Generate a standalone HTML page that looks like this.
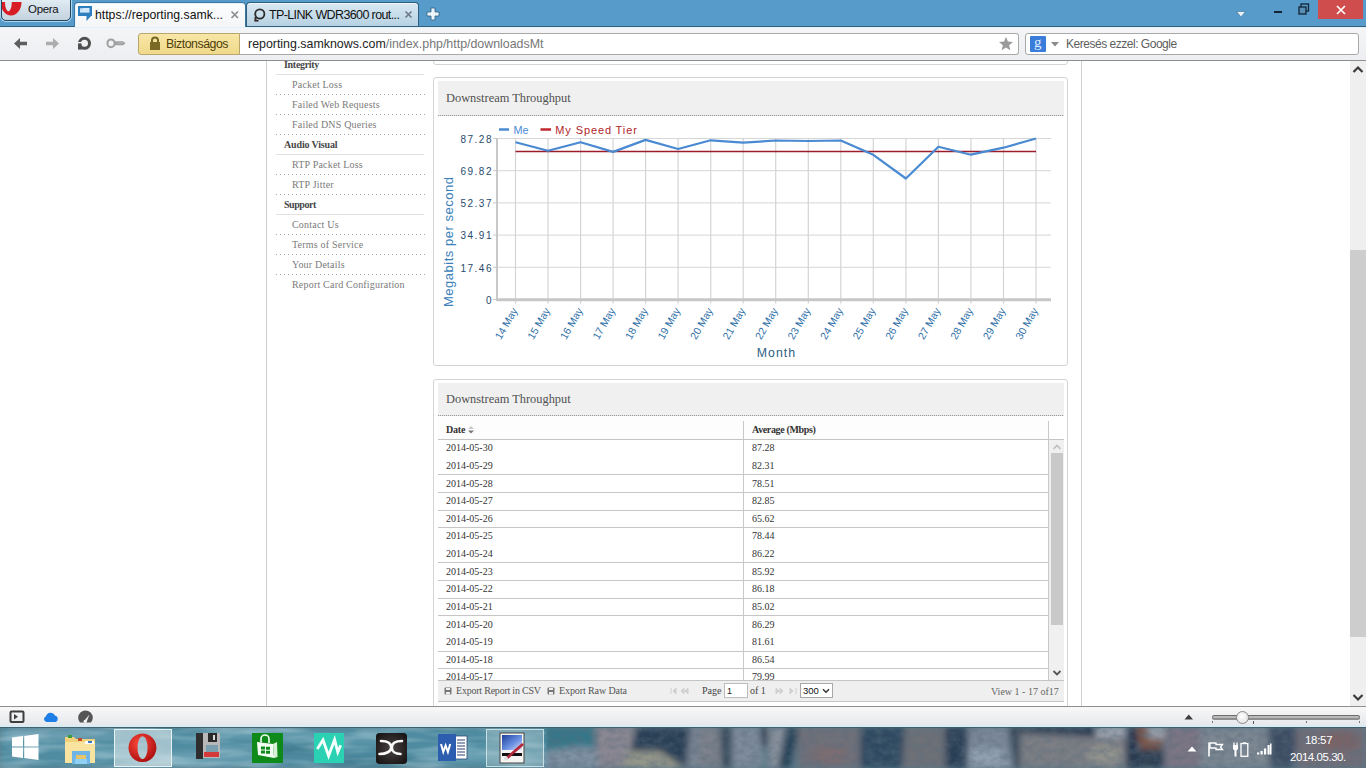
<!DOCTYPE html>
<html><head><meta charset="utf-8">
<style>
*{box-sizing:border-box}
html,body{margin:0;padding:0}
body{width:1366px;height:768px;position:relative;overflow:hidden;background:#fff;font-family:"Liberation Sans",sans-serif}
.a{position:absolute}
.ui{font-family:"Liberation Sans",sans-serif;white-space:nowrap}
.dots{height:1px;background:repeating-linear-gradient(90deg,#a8a8a8 0 1px,transparent 1px 4px)}
.hdr{background:#f0f0f0}
.hdr::after{content:"";position:absolute;left:0;right:0;bottom:-1px;height:1px;background:repeating-linear-gradient(90deg,#9c9c9c 0 1px,#dedede 1px 2px)}
.sf{font-family:"Liberation Serif",serif;white-space:nowrap}
</style></head><body>

<!-- ===== TAB BAR ===== -->
<div class="a" style="left:0;top:0;width:1366px;height:27px;background:#569bca;border-bottom:1px solid #2d5f80"></div>
<!-- Opera button -->
<div class="a" style="left:1px;top:-3px;width:70px;height:24px;border:1px solid #27465c;border-radius:0 0 5px 5px;background:linear-gradient(#e3edf4,#c4d3df);box-shadow:0 0 0 1px #a8d8f4"></div>
<div class="a ui" style="left:28px;top:3px;font-size:11.5px;letter-spacing:-0.3px;color:#111">Opera</div>
<!-- active tab -->
<div class="a" style="left:74px;top:2px;width:172px;height:26px;background:linear-gradient(#fbfdfe,#f3f5f7);border-radius:4px 4px 0 0;border:1px solid #3f77a0;border-bottom:none;box-shadow:inset 1px 1px 0 #e4f4fd"></div>
<div class="a ui" style="left:95px;top:8px;font-size:12.25px;color:#111">https://reporting.samk...</div>
<svg class="a" style="left:230px;top:10px" width="10" height="10"><path d="M1.5 1.5L8 8M8 1.5L1.5 8" stroke="#8c8c8c" stroke-width="1.7"/></svg>
<!-- inactive tab -->
<div class="a" style="left:246px;top:2px;width:173px;height:24px;background:linear-gradient(#d8e8f2,#b7d2e3);border-radius:4px 4px 0 0;border:1px solid #2d5f80;border-bottom:none;box-shadow:inset 0 1px 0 #f0f8ff"></div>
<div class="a ui" style="left:269px;top:8px;font-size:12.5px;letter-spacing:-0.62px;color:#111">TP-LINK WDR3600 rout...</div>
<svg class="a" style="left:404px;top:10px" width="10" height="10"><path d="M1.5 1.5L7.5 7.5M7.5 1.5L1.5 7.5" stroke="#6f7d88" stroke-width="1.7"/></svg>
<!-- plus -->
<svg class="a" style="left:426px;top:7px" width="15" height="14"><path d="M5 1H9V5H13V9H9V13H5V9H1V5H5Z" fill="#eef6fc" stroke="#2f5f80" stroke-width="0.8"/></svg>
<!-- window controls -->
<div class="a" style="left:1318px;top:0;width:45px;height:19px;background:#cf4d4d"></div>

<!-- ===== TOOLBAR ===== -->
<div class="a" style="left:0;top:27px;width:1366px;height:34px;background:linear-gradient(#f3f5f7,#eceef1);border-top:1px solid #e6f2fa;border-bottom:1px solid #8e8e8e"></div>
<!-- security badge -->
<div class="a" style="left:138px;top:33px;width:102px;height:22px;background:linear-gradient(#f7e6a6,#f0d98a);border:1px solid #b8a66c;border-radius:3px 0 0 3px"></div>
<div class="a ui" style="left:166px;top:37px;font-size:12.3px;letter-spacing:-0.45px;color:#4d3e08">Biztonságos</div>
<!-- address -->
<div class="a" style="left:239px;top:33px;width:780px;height:22px;background:#fff;border:1px solid #a9a9a9;border-left:1px solid #b8a66c;border-radius:0 3px 3px 0"></div>
<div class="a ui" style="left:248px;top:37px;font-size:12.4px;color:#222">reporting.samknows.com<span style="color:#777">/index.php/http/downloadsMt</span></div>
<!-- search -->
<div class="a" style="left:1025px;top:33px;width:334px;height:22px;background:#fff;border:1px solid #a9a9a9;border-radius:3px"></div>
<div class="a" style="left:1030px;top:36px;width:16px;height:16px;background:#3b7bd9;border-radius:1px"></div>
<div class="a ui" style="left:1066px;top:37px;font-size:12px;letter-spacing:-0.48px;color:#5e5e5e">Keresés ezzel: Google</div>

<!-- chrome icons -->
<svg class="a" style="left:2px;top:2px" width="22" height="16"><ellipse cx="9" cy="0" rx="10.5" ry="13.6" fill="#d81c24"/><ellipse cx="6.4" cy="0" rx="3.4" ry="9.2" fill="#dce6ee"/></svg>
<svg class="a" style="left:78px;top:6px" width="15" height="16"><path d="M0 0H14V10H13L8.5 15V10H0Z" fill="#2e7fbf"/><rect x="2" y="2" width="9.5" height="4.6" fill="#cfe8fb"/><rect x="2" y="2" width="3" height="1.5" fill="#a8d0ee"/></svg>
<svg class="a" style="left:253px;top:8px" width="14" height="15"><circle cx="6.8" cy="6" r="4.6" fill="none" stroke="#2b2b2b" stroke-width="1.8"/><rect x="1.5" y="9" width="2" height="4" fill="#3a2a2a"/><rect x="1.5" y="12" width="4" height="1.6" fill="#3a2a2a"/></svg>
<!-- window controls -->
<svg class="a" style="left:1236px;top:11px" width="10" height="7"><path d="M0.5 0.5H9.5L5 6Z" fill="#e8f2fb" stroke="#3f6f90" stroke-width="0.6"/></svg>
<div class="a" style="left:1274px;top:11px;width:8px;height:2px;background:#142436"></div>
<svg class="a" style="left:1298px;top:3px" width="12" height="12"><rect x="3" y="1" width="7.5" height="7" fill="none" stroke="#142436" stroke-width="1.3"/><rect x="1" y="4" width="7" height="7" fill="#5a8fb5" stroke="#142436" stroke-width="1.3"/></svg>
<svg class="a" style="left:1336px;top:5px" width="10" height="10"><path d="M1 1L9 9M9 1L1 9" stroke="#fff" stroke-width="1.7"/></svg>
<!-- nav icons -->
<svg class="a" style="left:13px;top:37px" width="16" height="14"><path d="M1 6.5L7 1V4.8H14V8.2H7V12Z" fill="#5e5e5e"/></svg>
<svg class="a" style="left:44px;top:37px" width="16" height="14"><path d="M15 6.5L9 1V4.8H2V8.2H9V12Z" fill="#acacac"/></svg>
<svg class="a" style="left:76px;top:35px" width="17" height="17"><circle cx="8.5" cy="8.3" r="5" fill="none" stroke="#505050" stroke-width="3"/><rect x="1" y="7" width="7" height="1.6" fill="#f0f1f3"/><rect x="2" y="8.6" width="3.6" height="6" fill="#505050"/></svg>
<svg class="a" style="left:106px;top:38px" width="21" height="11"><ellipse cx="5" cy="5.3" rx="3.6" ry="3.9" fill="none" stroke="#a0a0a0" stroke-width="2"/><path d="M8.5 3.3H17L19.5 5.3L17 7.3H8.5Z" fill="#a0a0a0"/><path d="M11 5H17" stroke="#c8c8c8" stroke-width="0.6"/></svg>
<svg class="a" style="left:149px;top:36px" width="12" height="14"><path d="M3 6V4.5A3 3 0 0 1 9 4.5V6" fill="none" stroke="#766627" stroke-width="2"/><rect x="1" y="6" width="10" height="8" fill="#7a6a25"/></svg>
<svg class="a" style="left:998px;top:36px" width="16" height="15"><path d="M8 0.8L9.9 5.6L15 6L11.1 9.3L12.4 14.3L8 11.5L3.6 14.3L4.9 9.3L1 6L6.1 5.6Z" fill="#9a9a9a"/></svg>
<svg class="a" style="left:1051px;top:42px" width="8" height="5"><path d="M0 0H8L4 4.5Z" fill="#8a8a8a"/></svg>
<div class="a ui" style="left:1034px;top:33px;font-size:15px;line-height:18px;color:#dfefff;font-family:'Liberation Serif',serif">g</div>

<!-- ===== PAGE ===== -->
<div class="a" style="left:266px;top:61px;width:1px;height:645px;background:#cfcfcf"></div>
<div class="a" style="left:1081px;top:61px;width:1px;height:645px;background:#cfcfcf"></div>

<div class="a" style="left:0;top:0;width:1366px;height:768px;clip-path:polygon(0 61px,1366px 61px,1366px 706px,0 706px)">
<!-- previous panel bottom -->
<div class="a" style="left:433px;top:40px;width:635px;height:25px;border:1px solid #d4d4d4;border-radius:3px;background:#fff"></div>
<!-- chart panel -->
<div class="a" style="left:433px;top:77px;width:635px;height:289px;border:1px solid #d4d4d4;border-radius:3px;background:#fff"></div>
<div class="a hdr" style="left:438px;top:81px;width:626px;height:34px"></div>
<div class="a sf" style="left:446px;top:92px;font-size:12.4px;line-height:12px;color:#505050">Downstream Throughput</div>
<!-- chart -->
<svg class="a" style="left:433px;top:115px" width="634" height="250"><g transform="translate(-433,-115)" font-family="Liberation Sans, sans-serif">
<line x1="497" y1="138.5" x2="1051" y2="138.5" stroke="#d6d6d6" stroke-width="1"/>
<line x1="493" y1="138.5" x2="497" y2="138.5" stroke="#c8c8c8" stroke-width="1"/>
<line x1="497" y1="170.7" x2="1051" y2="170.7" stroke="#d6d6d6" stroke-width="1"/>
<line x1="493" y1="170.7" x2="497" y2="170.7" stroke="#c8c8c8" stroke-width="1"/>
<line x1="497" y1="202.9" x2="1051" y2="202.9" stroke="#d6d6d6" stroke-width="1"/>
<line x1="493" y1="202.9" x2="497" y2="202.9" stroke="#c8c8c8" stroke-width="1"/>
<line x1="497" y1="235.1" x2="1051" y2="235.1" stroke="#d6d6d6" stroke-width="1"/>
<line x1="493" y1="235.1" x2="497" y2="235.1" stroke="#c8c8c8" stroke-width="1"/>
<line x1="497" y1="267.3" x2="1051" y2="267.3" stroke="#d6d6d6" stroke-width="1"/>
<line x1="493" y1="267.3" x2="497" y2="267.3" stroke="#c8c8c8" stroke-width="1"/>
<line x1="515.5" y1="138" x2="515.5" y2="303.5" stroke="#d4d4d4" stroke-width="1.2"/>
<line x1="548.0" y1="138" x2="548.0" y2="303.5" stroke="#d4d4d4" stroke-width="1.2"/>
<line x1="580.6" y1="138" x2="580.6" y2="303.5" stroke="#d4d4d4" stroke-width="1.2"/>
<line x1="613.1" y1="138" x2="613.1" y2="303.5" stroke="#d4d4d4" stroke-width="1.2"/>
<line x1="645.6" y1="138" x2="645.6" y2="303.5" stroke="#d4d4d4" stroke-width="1.2"/>
<line x1="678.1" y1="138" x2="678.1" y2="303.5" stroke="#d4d4d4" stroke-width="1.2"/>
<line x1="710.7" y1="138" x2="710.7" y2="303.5" stroke="#d4d4d4" stroke-width="1.2"/>
<line x1="743.2" y1="138" x2="743.2" y2="303.5" stroke="#d4d4d4" stroke-width="1.2"/>
<line x1="775.7" y1="138" x2="775.7" y2="303.5" stroke="#d4d4d4" stroke-width="1.2"/>
<line x1="808.3" y1="138" x2="808.3" y2="303.5" stroke="#d4d4d4" stroke-width="1.2"/>
<line x1="840.8" y1="138" x2="840.8" y2="303.5" stroke="#d4d4d4" stroke-width="1.2"/>
<line x1="873.3" y1="138" x2="873.3" y2="303.5" stroke="#d4d4d4" stroke-width="1.2"/>
<line x1="905.9" y1="138" x2="905.9" y2="303.5" stroke="#d4d4d4" stroke-width="1.2"/>
<line x1="938.4" y1="138" x2="938.4" y2="303.5" stroke="#d4d4d4" stroke-width="1.2"/>
<line x1="970.9" y1="138" x2="970.9" y2="303.5" stroke="#d4d4d4" stroke-width="1.2"/>
<line x1="1003.5" y1="138" x2="1003.5" y2="303.5" stroke="#d4d4d4" stroke-width="1.2"/>
<line x1="1036.0" y1="138" x2="1036.0" y2="303.5" stroke="#d4d4d4" stroke-width="1.2"/>
<line x1="497" y1="138" x2="497" y2="301" stroke="#c8c8c8" stroke-width="2"/>
<line x1="497" y1="299.8" x2="1051" y2="299.8" stroke="#c6c6c6" stroke-width="3"/>
<line x1="493" y1="299.5" x2="497" y2="299.5" stroke="#c8c8c8" stroke-width="1"/>
<text x="493" y="142.7" text-anchor="end" font-size="10" fill="#274b6d" letter-spacing="1.5">87.28</text>
<text x="493" y="174.9" text-anchor="end" font-size="10" fill="#274b6d" letter-spacing="1.5">69.82</text>
<text x="493" y="207.1" text-anchor="end" font-size="10" fill="#274b6d" letter-spacing="1.5">52.37</text>
<text x="493" y="239.3" text-anchor="end" font-size="10" fill="#274b6d" letter-spacing="1.5">34.91</text>
<text x="493" y="271.5" text-anchor="end" font-size="10" fill="#274b6d" letter-spacing="1.5">17.46</text>
<text x="493" y="303.7" text-anchor="end" font-size="10" fill="#274b6d" letter-spacing="1.5">0</text>
<line x1="515.5" y1="151.5" x2="1036.0" y2="151.5" stroke="#9c1c2a" stroke-width="1.4"/>
<polyline points="515.5,142.2 548.0,150.8 580.6,142.2 613.1,151.9 645.6,139.9 678.1,149.0 710.7,140.3 743.2,142.7 775.7,140.5 808.3,141.0 840.8,140.5 873.3,154.8 905.9,178.5 938.4,146.7 970.9,154.7 1003.5,147.7 1036.0,138.5" fill="none" stroke="#4a8ad2" stroke-width="2.2" stroke-linejoin="round"/>
<line x1="499" y1="129.5" x2="509" y2="129.5" stroke="#4a8bd4" stroke-width="2.5"/>
<text x="513.5" y="133.7" font-size="11" fill="#4a8bd4" textLength="15" lengthAdjust="spacingAndGlyphs">Me</text>
<line x1="540.5" y1="129.5" x2="551" y2="129.5" stroke="#c0282d" stroke-width="2.5"/>
<text x="555.3" y="133.7" font-size="11" fill="#b0252b" textLength="81.5" lengthAdjust="spacing">My Speed Tier</text>
<text transform="translate(518.0,310.5) rotate(-60)" text-anchor="end" font-size="10.5" fill="#2f70a8">14 May</text>
<text transform="translate(550.5,310.5) rotate(-60)" text-anchor="end" font-size="10.5" fill="#2f70a8">15 May</text>
<text transform="translate(583.1,310.5) rotate(-60)" text-anchor="end" font-size="10.5" fill="#2f70a8">16 May</text>
<text transform="translate(615.6,310.5) rotate(-60)" text-anchor="end" font-size="10.5" fill="#2f70a8">17 May</text>
<text transform="translate(648.1,310.5) rotate(-60)" text-anchor="end" font-size="10.5" fill="#2f70a8">18 May</text>
<text transform="translate(680.6,310.5) rotate(-60)" text-anchor="end" font-size="10.5" fill="#2f70a8">19 May</text>
<text transform="translate(713.2,310.5) rotate(-60)" text-anchor="end" font-size="10.5" fill="#2f70a8">20 May</text>
<text transform="translate(745.7,310.5) rotate(-60)" text-anchor="end" font-size="10.5" fill="#2f70a8">21 May</text>
<text transform="translate(778.2,310.5) rotate(-60)" text-anchor="end" font-size="10.5" fill="#2f70a8">22 May</text>
<text transform="translate(810.8,310.5) rotate(-60)" text-anchor="end" font-size="10.5" fill="#2f70a8">23 May</text>
<text transform="translate(843.3,310.5) rotate(-60)" text-anchor="end" font-size="10.5" fill="#2f70a8">24 May</text>
<text transform="translate(875.8,310.5) rotate(-60)" text-anchor="end" font-size="10.5" fill="#2f70a8">25 May</text>
<text transform="translate(908.4,310.5) rotate(-60)" text-anchor="end" font-size="10.5" fill="#2f70a8">26 May</text>
<text transform="translate(940.9,310.5) rotate(-60)" text-anchor="end" font-size="10.5" fill="#2f70a8">27 May</text>
<text transform="translate(973.4,310.5) rotate(-60)" text-anchor="end" font-size="10.5" fill="#2f70a8">28 May</text>
<text transform="translate(1006.0,310.5) rotate(-60)" text-anchor="end" font-size="10.5" fill="#2f70a8">29 May</text>
<text transform="translate(1038.5,310.5) rotate(-60)" text-anchor="end" font-size="10.5" fill="#2f70a8">30 May</text>
<text transform="translate(453,307) rotate(-90)" font-size="13" fill="#3a80ba" textLength="130" lengthAdjust="spacing">Megabits per second</text>
<text x="756.7" y="356.8" font-size="12.3" fill="#2b6182" textLength="38.5" lengthAdjust="spacing">Month</text>
</g></svg>
<!-- table panel -->
<div class="a" style="left:433px;top:379px;width:635px;height:340px;border:1px solid #d4d4d4;border-radius:3px;background:#fff"></div>
<div class="a hdr" style="left:438px;top:383px;width:626px;height:32px"></div>
<div class="a sf" style="left:446px;top:393px;font-size:12.4px;line-height:12px;color:#505050">Downstream Throughput</div>

<!-- table -->
<div class="a" style="left:438px;top:416px;width:611px;height:23px;background:#fdfdfd"></div>
<div class="a sf" style="left:446px;top:425px;font-size:10px;line-height:10px;font-weight:bold;color:#333;letter-spacing:-0.2px">Date</div>
<svg class="a" style="left:467px;top:426px" width="8" height="8"><path d="M1 3 L4 0 L7 3Z" fill="#c8c8c8"/><path d="M1 4.5 L4 7.5 L7 4.5Z" fill="#777"/></svg>
<div class="a sf" style="left:752px;top:425px;font-size:10px;line-height:10px;font-weight:bold;color:#333;letter-spacing:-0.35px">Average (Mbps)</div>
<div class="a" style="left:743px;top:421px;width:1px;height:18px;background:#c8c8c8"></div>
<div class="a" style="left:1048px;top:421px;width:1px;height:18px;background:#c8c8c8"></div>
<div class="a" style="left:438px;top:439px;width:626px;height:1px;background:#c4c4c4"></div>
<div class="a" style="left:438px;top:440px;width:611px;height:240px;overflow:hidden">
<div class="a sf" style="left:8px;top:3px;font-size:10px;line-height:10px;color:#333">2014-05-30</div>
<div class="a sf" style="left:314px;top:3px;font-size:10px;line-height:10px;color:#333">87.28</div>
<div class="a sf" style="left:8px;top:21px;font-size:10px;line-height:10px;color:#333">2014-05-29</div>
<div class="a sf" style="left:314px;top:21px;font-size:10px;line-height:10px;color:#333">82.31</div>
<div class="a sf" style="left:8px;top:39px;font-size:10px;line-height:10px;color:#333">2014-05-28</div>
<div class="a sf" style="left:314px;top:39px;font-size:10px;line-height:10px;color:#333">78.51</div>
<div class="a sf" style="left:8px;top:56px;font-size:10px;line-height:10px;color:#333">2014-05-27</div>
<div class="a sf" style="left:314px;top:56px;font-size:10px;line-height:10px;color:#333">82.85</div>
<div class="a sf" style="left:8px;top:74px;font-size:10px;line-height:10px;color:#333">2014-05-26</div>
<div class="a sf" style="left:314px;top:74px;font-size:10px;line-height:10px;color:#333">65.62</div>
<div class="a sf" style="left:8px;top:91px;font-size:10px;line-height:10px;color:#333">2014-05-25</div>
<div class="a sf" style="left:314px;top:91px;font-size:10px;line-height:10px;color:#333">78.44</div>
<div class="a sf" style="left:8px;top:109px;font-size:10px;line-height:10px;color:#333">2014-05-24</div>
<div class="a sf" style="left:314px;top:109px;font-size:10px;line-height:10px;color:#333">86.22</div>
<div class="a sf" style="left:8px;top:127px;font-size:10px;line-height:10px;color:#333">2014-05-23</div>
<div class="a sf" style="left:314px;top:127px;font-size:10px;line-height:10px;color:#333">85.92</div>
<div class="a sf" style="left:8px;top:144px;font-size:10px;line-height:10px;color:#333">2014-05-22</div>
<div class="a sf" style="left:314px;top:144px;font-size:10px;line-height:10px;color:#333">86.18</div>
<div class="a sf" style="left:8px;top:162px;font-size:10px;line-height:10px;color:#333">2014-05-21</div>
<div class="a sf" style="left:314px;top:162px;font-size:10px;line-height:10px;color:#333">85.02</div>
<div class="a sf" style="left:8px;top:180px;font-size:10px;line-height:10px;color:#333">2014-05-20</div>
<div class="a sf" style="left:314px;top:180px;font-size:10px;line-height:10px;color:#333">86.29</div>
<div class="a sf" style="left:8px;top:197px;font-size:10px;line-height:10px;color:#333">2014-05-19</div>
<div class="a sf" style="left:314px;top:197px;font-size:10px;line-height:10px;color:#333">81.61</div>
<div class="a sf" style="left:8px;top:215px;font-size:10px;line-height:10px;color:#333">2014-05-18</div>
<div class="a sf" style="left:314px;top:215px;font-size:10px;line-height:10px;color:#333">86.54</div>
<div class="a sf" style="left:8px;top:232px;font-size:10px;line-height:10px;color:#333">2014-05-17</div>
<div class="a sf" style="left:314px;top:232px;font-size:10px;line-height:10px;color:#333">79.99</div>
<div class="a" style="left:0;top:34px;width:611px;height:1px;background:#c6c6c6"></div>
<div class="a" style="left:0;top:52px;width:611px;height:1px;background:#c6c6c6"></div>
<div class="a" style="left:0;top:70px;width:611px;height:1px;background:#c6c6c6"></div>
<div class="a" style="left:0;top:87px;width:611px;height:1px;background:#c6c6c6"></div>
<div class="a" style="left:0;top:122px;width:611px;height:1px;background:#c6c6c6"></div>
<div class="a" style="left:0;top:140px;width:611px;height:1px;background:#c6c6c6"></div>
<div class="a" style="left:0;top:158px;width:611px;height:1px;background:#c6c6c6"></div>
<div class="a" style="left:0;top:175px;width:611px;height:1px;background:#c6c6c6"></div>
<div class="a" style="left:0;top:211px;width:611px;height:1px;background:#c6c6c6"></div>
<div class="a" style="left:0;top:228px;width:611px;height:1px;background:#c6c6c6"></div>
<div class="a" style="left:305px;top:0;width:1px;height:240px;background:#c8c8c8"></div>
<div class="a" style="left:610px;top:0;width:1px;height:240px;background:#c8c8c8"></div>
</div>
<div class="a" style="left:1049px;top:440px;width:15px;height:240px;background:#f0f0f0"></div>
<div class="a" style="left:1051px;top:453px;width:12px;height:172px;background:#c9c9c9"></div>
<svg class="a" style="left:1052px;top:443px" width="10" height="8"><path d="M1.5 6 L5 2.5 L8.5 6" fill="none" stroke="#bdbdbd" stroke-width="1.6"/></svg>
<svg class="a" style="left:1052px;top:669px" width="10" height="8"><path d="M1.5 2 L5 5.5 L8.5 2" fill="none" stroke="#555" stroke-width="1.8"/></svg>
<div class="a" style="left:438px;top:680px;width:626px;height:22px;background:#efefef;border-top:1px solid #c4c4c4;border-bottom:1px solid #c4c4c4"></div>
<svg class="a" style="left:444px;top:687px" width="8" height="8"><rect x="0.5" y="0.5" width="7" height="7" rx="1" fill="#777"/><rect x="2" y="1" width="4" height="2" fill="#efefef"/><rect x="2" y="5" width="4" height="2.5" fill="#efefef"/></svg>
<div class="a sf" style="left:456px;top:686px;font-size:10px;line-height:10px;color:#555;letter-spacing:-0.22px">Export Report in CSV</div>
<svg class="a" style="left:547px;top:687px" width="8" height="8"><rect x="0.5" y="0.5" width="7" height="7" rx="1" fill="#777"/><rect x="2" y="1" width="4" height="2" fill="#efefef"/><rect x="2" y="5" width="4" height="2.5" fill="#efefef"/></svg>
<div class="a sf" style="left:559px;top:686px;font-size:10px;line-height:10px;color:#555;letter-spacing:-0.1px">Export Raw Data</div>
<svg class="a" style="left:669px;top:686px" width="28" height="10"><path d="M2 2v6M7 2L4 5l3 3z M15 2l-3 3 3 3z M19 2l-3 3 3 3z" fill="#d0d0d0" stroke="#d0d0d0" stroke-width="1"/></svg>
<div class="a sf" style="left:702px;top:686px;font-size:10px;line-height:10px;color:#444">Page</div>
<div class="a" style="left:724px;top:683px;width:24px;height:15px;background:#fff;border:1px solid #bdbdbd"></div>
<div class="a ui" style="left:727px;top:686px;font-size:9px;line-height:10px;color:#222">1</div>
<div class="a sf" style="left:750px;top:686px;font-size:10px;line-height:10px;color:#444">of 1</div>
<svg class="a" style="left:772px;top:686px" width="28" height="10"><path d="M4 2l3 3-3 3z M8 2l3 3-3 3z M18 2l3 3-3 3z M24 2v6" fill="#d0d0d0" stroke="#d0d0d0" stroke-width="1"/></svg>
<div class="a" style="left:800px;top:683px;width:33px;height:15px;background:#fff;border:1px solid #a8a8a8"></div>
<div class="a ui" style="left:803px;top:686px;font-size:9.5px;line-height:10px;color:#111">300</div>
<svg class="a" style="left:822px;top:688px" width="8" height="6"><path d="M1 1.2L4 4.2L7 1.2" fill="none" stroke="#333" stroke-width="1.5"/></svg>
<div class="a sf" style="left:991px;top:687px;font-size:10px;line-height:10px;color:#666">View 1 - 17 of17</div>
<!-- sidebar -->
<div class="a sf" style="left:284px;top:60px;font-size:10px;line-height:10px;font-weight:bold;color:#484848;letter-spacing:-0.3px">Integrity</div>
<div class="a" style="left:276px;top:74px;width:148px;height:1px;background:#e2e2e2"></div>
<div class="a sf" style="left:292px;top:80px;font-size:10px;line-height:10px;color:#7a7a7a;letter-spacing:0.2px">Packet Loss</div>
<div class="a dots" style="left:276px;top:94px;width:150px"></div>
<div class="a sf" style="left:292px;top:100px;font-size:10px;line-height:10px;color:#7a7a7a;letter-spacing:0.2px">Failed Web Requests</div>
<div class="a dots" style="left:276px;top:114px;width:150px"></div>
<div class="a sf" style="left:292px;top:120px;font-size:10px;line-height:10px;color:#7a7a7a;letter-spacing:0.2px">Failed DNS Queries</div>
<div class="a dots" style="left:276px;top:134px;width:150px"></div>
<div class="a sf" style="left:284px;top:140px;font-size:10px;line-height:10px;font-weight:bold;color:#484848;letter-spacing:-0.15px">Audio Visual</div>
<div class="a" style="left:276px;top:154px;width:148px;height:1px;background:#e2e2e2"></div>
<div class="a sf" style="left:292px;top:160px;font-size:10px;line-height:10px;color:#7a7a7a;letter-spacing:0.2px">RTP Packet Loss</div>
<div class="a dots" style="left:276px;top:174px;width:150px"></div>
<div class="a sf" style="left:292px;top:180px;font-size:10px;line-height:10px;color:#7a7a7a;letter-spacing:0.2px">RTP Jitter</div>
<div class="a dots" style="left:276px;top:194px;width:150px"></div>
<div class="a sf" style="left:284px;top:200px;font-size:10px;line-height:10px;font-weight:bold;color:#484848;letter-spacing:-0.45px">Support</div>
<div class="a" style="left:276px;top:214px;width:148px;height:1px;background:#e2e2e2"></div>
<div class="a sf" style="left:292px;top:220px;font-size:10px;line-height:10px;color:#7a7a7a;letter-spacing:0.2px">Contact Us</div>
<div class="a dots" style="left:276px;top:234px;width:150px"></div>
<div class="a sf" style="left:292px;top:240px;font-size:10px;line-height:10px;color:#7a7a7a;letter-spacing:0.2px">Terms of Service</div>
<div class="a dots" style="left:276px;top:254px;width:150px"></div>
<div class="a sf" style="left:292px;top:260px;font-size:10px;line-height:10px;color:#7a7a7a;letter-spacing:0.2px">Your Details</div>
<div class="a dots" style="left:276px;top:274px;width:150px"></div>
<div class="a sf" style="left:292px;top:280px;font-size:10px;line-height:10px;color:#7a7a7a;letter-spacing:0.2px">Report Card Configuration</div>

</div>
<!-- browser scrollbar -->
<div class="a" style="left:1350px;top:61px;width:16px;height:645px;background:#efefef"></div>
<div class="a" style="left:1350px;top:250px;width:16px;height:387px;background:#cdcdcd"></div>

<svg class="a" style="left:1352px;top:65px" width="12" height="9"><path d="M1.5 7L6 2.5L10.5 7" fill="none" stroke="#3a3a3a" stroke-width="2.2"/></svg>
<svg class="a" style="left:1352px;top:693px" width="12" height="9"><path d="M1.5 2L6 6.5L10.5 2" fill="none" stroke="#3a3a3a" stroke-width="2.2"/></svg>
<!-- ===== STATUS BAR ===== -->
<div class="a" style="left:0;top:706px;width:1366px;height:21px;background:linear-gradient(#f8f8f9,#e9eaed 85%,#dde9f0);border-top:1px solid #8e8e8e;border-bottom:1px solid #d4eef6"></div>
<svg class="a" style="left:9px;top:710px" width="17" height="14"><rect x="1.5" y="1.5" width="13" height="10.5" rx="1" fill="none" stroke="#3d3d3d" stroke-width="2"/><path d="M5 4L9 6.8L5 9.5Z" fill="#3d3d3d"/></svg>
<svg class="a" style="left:43px;top:711px" width="16" height="12"><path d="M3.5 11A3 3 0 0 1 3 5.2A4.8 4.8 0 0 1 12 4.6A3.3 3.3 0 0 1 12.5 11Z" fill="#1f7fe6"/></svg>
<svg class="a" style="left:77px;top:710px" width="17" height="14"><path d="M3 12.5A7.3 7.3 0 1 1 14 12.5Z" fill="#555"/><path d="M7 11L12.5 4.5L9.5 12Z" fill="#f2f2f2"/><circle cx="8.2" cy="11.3" r="1.6" fill="#f2f2f2"/></svg>
<svg class="a" style="left:1184px;top:714px" width="10" height="6"><path d="M0.5 5.5L4.8 0.5L9 5.5Z" fill="#3e3e3e"/></svg>
<div class="a" style="left:1212px;top:715px;width:148px;height:5px;border-radius:3px;background:#8e8e8e;box-shadow:inset 0 1px 1px #6a6a6a"></div>
<div class="a" style="left:1213px;top:716px;width:146px;height:2px;border-radius:2px;background:#b9b9b9"></div>
<div class="a" style="left:1236px;top:711px;width:13px;height:13px;border-radius:50%;background:radial-gradient(circle at 45% 40%,#ffffff,#dadada);border:1.2px solid #8a8a8a"></div>
<div class="a" style="left:1212px;top:721px;width:1px;height:2px;background:#777"></div>
<div class="a" style="left:1253px;top:721px;width:1px;height:3px;background:#555"></div>
<div class="a" style="left:1306px;top:721px;width:1px;height:2px;background:#777"></div>
<div class="a" style="left:1359px;top:721px;width:1px;height:2px;background:#777"></div>

<!-- ===== TASKBAR ===== -->
<svg class="a" style="left:0;top:727px" width="1366" height="41"><defs><filter id="tbblur" x="-2%" y="-50%" width="104%" height="200%"><feGaussianBlur stdDeviation="3"/></filter></defs><rect width="1366" height="41" fill="#5a7a8a"/><g filter="url(#tbblur)"><rect x="0" y="0" width="560" height="41" fill="#4f8ca1"/><ellipse cx="60" cy="8" rx="60" ry="6" fill="#6a9db0"/><ellipse cx="110" cy="26" rx="40" ry="4" fill="#70a6b8"/><ellipse cx="250" cy="6" rx="50" ry="4" fill="#6aa2b4"/><ellipse cx="380" cy="34" rx="50" ry="4" fill="#3f7a90"/><ellipse cx="300" cy="22" rx="30" ry="5" fill="#3f7b91"/><ellipse cx="160" cy="36" rx="40" ry="4" fill="#6aa2b4"/><ellipse cx="200" cy="30" rx="80" ry="5" fill="#6aa0b2"/><ellipse cx="330" cy="12" rx="70" ry="5" fill="#5f98ab"/><ellipse cx="470" cy="28" rx="60" ry="6" fill="#6aa0b2"/><ellipse cx="520" cy="10" rx="40" ry="5" fill="#5a92a6"/><polygon points="545,0 600,0 598,22 575,20 560,24 545,26" fill="#347789"/><polygon points="545,24 560,22 580,19 600,22 605,41 545,41" fill="#7e91a3"/><polygon points="595,0 640,0 636,15 625,41 598,41 596,20" fill="#8a8792"/><polygon points="636,0 695,0 692,41 680,41 660,26 630,26" fill="#2c4157"/><polygon points="628,24 660,24 685,41 622,41" fill="#949689"/><polygon points="690,0 700,0 700,41 686,41" fill="#798392"/><rect x="700" y="0" width="22" height="41" fill="#7c818b"/><polygon points="720,0 736,0 732,41 722,41" fill="#34485b"/><rect x="732" y="0" width="30" height="41" fill="#7e8b9c"/><polygon points="760,0 772,0 770,20 762,20" fill="#273b4d"/><rect x="768" y="0" width="20" height="41" fill="#88909c"/><polygon points="786,0 800,0 790,41 778,41" fill="#274258"/><rect x="798" y="0" width="62" height="41" fill="#6f6f79"/><ellipse cx="830" cy="28" rx="18" ry="10" fill="#7c6d71"/><rect x="860" y="0" width="48" height="41" fill="#2f4861"/><polygon points="905,0 948,0 945,41 902,41" fill="#6d6f77"/><rect x="945" y="0" width="24" height="41" fill="#2b4157"/><polygon points="968,0 1012,0 1020,41 968,41" fill="#7c889a"/><polygon points="968,22 1000,20 1010,41 968,41" fill="#909eb0"/><polygon points="1008,0 1020,0 1022,41 1014,41" fill="#344659"/><rect x="1020" y="0" width="108" height="41" fill="#7c7e84"/><polygon points="1020,0 1125,0 1125,12 1100,10 1060,8 1020,6" fill="#273950"/><ellipse cx="1105" cy="28" rx="18" ry="10" fill="#92928d"/><rect x="1096" y="0" width="30" height="11" fill="#9ca3ae"/><rect x="1126" y="0" width="12" height="41" fill="#273950"/><polygon points="1136,0 1165,0 1162,24 1140,22" fill="#7c5245"/><rect x="1136" y="22" width="28" height="19" fill="#2e3f52"/><rect x="1148" y="0" width="20" height="12" fill="#979ea8"/><rect x="1165" y="0" width="35" height="41" fill="#7c7584"/><rect x="1200" y="0" width="70" height="41" fill="#7c8792"/><polygon points="1268,0 1300,0 1292,41 1270,41" fill="#3d4d63"/><rect x="1296" y="0" width="70" height="41" fill="#6f6d77"/><ellipse cx="1340" cy="14" rx="20" ry="10" fill="#7c6466"/></g><filter id="rockn" x="0" y="0" width="100%" height="100%"><feTurbulence type="fractalNoise" baseFrequency="0.12 0.18" numOctaves="3" seed="7"/><feColorMatrix type="matrix" values="0 0 0 0 0.1  0 0 0 0 0.15  0 0 0 0 0.2  0 0 0 -1.6 1.05"/></filter><rect x="548" y="1" width="818" height="40" filter="url(#rockn)" opacity="0.55"/><filter id="watern" x="0" y="0" width="100%" height="100%"><feTurbulence type="fractalNoise" baseFrequency="0.02 0.12" numOctaves="2" seed="3"/><feColorMatrix type="matrix" values="0 0 0 0 0.75  0 0 0 0 0.88  0 0 0 0 0.92  0 0 0 1.4 -0.6"/></filter><rect x="0" y="1" width="546" height="40" filter="url(#watern)" opacity="0.6"/><rect x="0" y="0" width="1366" height="1" fill="#3d5866" opacity="0.8"/></svg>
<!-- taskbar icons -->
<svg class="a" style="left:12px;top:734px" width="27" height="27"><path d="M0 3.6L11 2.1V12.4H0Z M12.2 1.9L26.5 0V12.4H12.2Z M0 13.6H11V24L0 22.5Z M12.2 13.6H26.5V26L12.2 24.1Z" fill="#fff"/></svg>
<svg class="a" style="left:64px;top:734px" width="34" height="31"><path d="M1 3H10L12 5H31V29H1Z" fill="#f1d27a"/><path d="M1 8H31V29H1Z" fill="#f8e4a0"/><rect x="4" y="1" width="4" height="3" fill="#3c9b3c"/><rect x="14" y="4" width="4" height="3" fill="#c44a2a"/><path d="M21 7H30V10H21Z" fill="#fff"/><rect x="24" y="7" width="4" height="2" fill="#3a7ac0"/><path d="M8 17H26V30H8Z" fill="#6fb6e6"/><rect x="12" y="21" width="10" height="4" fill="#e6c46a"/><rect x="11" y="25" width="12" height="5" fill="#8fd0f5"/></svg>
<div class="a" style="left:114px;top:729px;width:58px;height:38px;background:rgba(215,228,232,.6);border:1px solid #e6f2f4"></div>
<svg class="a" style="left:128px;top:733px" width="30" height="30"><defs><radialGradient id="og" cx="40%" cy="35%" r="70%"><stop offset="0" stop-color="#ff4a3a"/><stop offset="1" stop-color="#a80d10"/></radialGradient></defs><path d="M14.5 0.5A14 14.3 0 1 1 14.4 0.5Z M14.5 3.3A5 11.3 0 1 0 14.6 3.3Z" fill="url(#og)" fill-rule="evenodd"/></svg>
<svg class="a" style="left:195px;top:732px" width="27" height="28"><rect x="1" y="1" width="7" height="26" fill="#2e2e2e"/><path d="M8 1H25V26H8Z" fill="#b8b8b8"/><rect x="13" y="1" width="9" height="9" fill="#2a2a2a"/><rect x="18" y="3" width="2" height="5" fill="#ddd"/><rect x="11" y="13" width="12" height="8" fill="#7aa0b0"/><rect x="9" y="20" width="15" height="5" fill="#d43a3a"/></svg>
<svg class="a" style="left:252px;top:733px" width="31" height="30"><rect width="31" height="30" fill="#0e8a1a"/><path d="M5 9L21 11L22 25L6 22Z" fill="#f4fff4"/><path d="M21 11L25 9L25.5 24L22 25Z" fill="#d8f0d8"/><path d="M9 9.5V6A4 4 0 0 1 17 6V10" fill="none" stroke="#f4fff4" stroke-width="1.6"/><path d="M9 13.5H13V16.5H9Z M14 13.8H18V16.8H14Z M9 17.5H13V20.5H9Z M14 17.8H18V20.8H14Z" fill="#0e8a1a"/></svg>
<svg class="a" style="left:314px;top:733px" width="30" height="30"><rect width="30" height="30" fill="#2bd1b3"/><path d="M3.3 16L9 7L14.6 22.8L20.6 6.7L23.8 19.2L26.7 12.3" fill="none" stroke="#f4fffc" stroke-width="2.8" stroke-linejoin="miter"/></svg>
<svg class="a" style="left:376px;top:733px" width="31" height="31"><defs><radialGradient id="xg" cx="50%" cy="50%" r="65%"><stop offset="0" stop-color="#4a4543"/><stop offset="1" stop-color="#161212"/></radialGradient></defs><rect width="31" height="31" rx="3.5" fill="url(#xg)"/><path d="M5 8C12 8 15.2 10.5 15.2 14.5C15.2 18.5 10 21 3.5 21 M26 8C19 8 15.8 10.5 15.8 14.5C15.8 18.5 19.5 21 24.5 21" fill="none" stroke="#fafafa" stroke-width="2.6" stroke-linecap="round"/></svg>
<svg class="a" style="left:437px;top:733px" width="32" height="29"><rect x="18" y="3" width="12" height="23" fill="#fff" stroke="#2b4a7a" stroke-width="0.8"/><path d="M20 7H28M20 10H28M20 13H28M20 16H28M20 19H28M20 22H28" stroke="#2b3f6a" stroke-width="1"/><path d="M1 1H19V28H1Z" fill="#2c5dae"/><path d="M4 11L6.3 19L8.6 12.5L10.9 19L13.2 11" fill="none" stroke="#fff" stroke-width="2"/></svg>
<div class="a" style="left:486px;top:729px;width:58px;height:38px;background:rgba(185,205,210,.35);border:1px solid #c8dfe3"></div>
<svg class="a" style="left:499px;top:732px" width="27" height="32"><rect x="1" y="1" width="24" height="30" fill="#f4f4f2" stroke="#444" stroke-width="1"/><defs><linearGradient id="pg" x1="0" y1="0" x2="1" y2="1"><stop offset="0" stop-color="#1e3f9a"/><stop offset="0.6" stop-color="#6f96e6"/><stop offset="1" stop-color="#f0e0f0"/></linearGradient></defs><rect x="3" y="3" width="20" height="15" fill="url(#pg)"/><rect x="3" y="21" width="20" height="3" fill="#111"/><path d="M8 26L24 12" stroke="#b0283a" stroke-width="2.8"/><circle cx="7" cy="26.5" r="2" fill="#ddd"/></svg>
<!-- tray -->
<svg class="a" style="left:1187px;top:746px" width="10" height="6"><path d="M0.5 5.5L5 0.5L9.5 5.5Z" fill="#fff"/></svg>
<svg class="a" style="left:1208px;top:742px" width="16" height="15"><path d="M1 0.5V14.5" stroke="#fff" stroke-width="1.6"/><path d="M2 1H8V2.5H14.5L12.5 5L14.5 7.5H8V6H2Z" fill="none" stroke="#fff" stroke-width="1.3"/></svg>
<svg class="a" style="left:1232px;top:742px" width="17" height="15"><path d="M2 0.5V3M5 0.5V3" stroke="#fff" stroke-width="1.3"/><path d="M1 3H6V7L4.5 8.5V14.5H2.5V8.5L1 7Z" fill="#fff"/><rect x="9" y="1.5" width="6.8" height="12.8" fill="none" stroke="#fff" stroke-width="1.3"/><rect x="11" y="0.3" width="3" height="1.3" fill="#fff"/></svg>
<svg class="a" style="left:1256px;top:743px" width="16" height="12"><path d="M1 9.5h2.2v2H1Z M4.5 8h2.2v3.5H4.5Z M8 5.5h2.2v6H8Z M11.5 2h2.2v9.5h-2.2Z M14 0.5h1.5v11H14Z" fill="#fff"/></svg>
<div class="a ui" style="left:1305px;top:734px;font-size:11.5px;line-height:12px;color:#fff;letter-spacing:-0.3px">18:57</div>
<div class="a ui" style="left:1290px;top:751px;font-size:11.5px;line-height:12px;color:#fff;letter-spacing:-0.45px">2014.05.30.</div>

</body></html>
